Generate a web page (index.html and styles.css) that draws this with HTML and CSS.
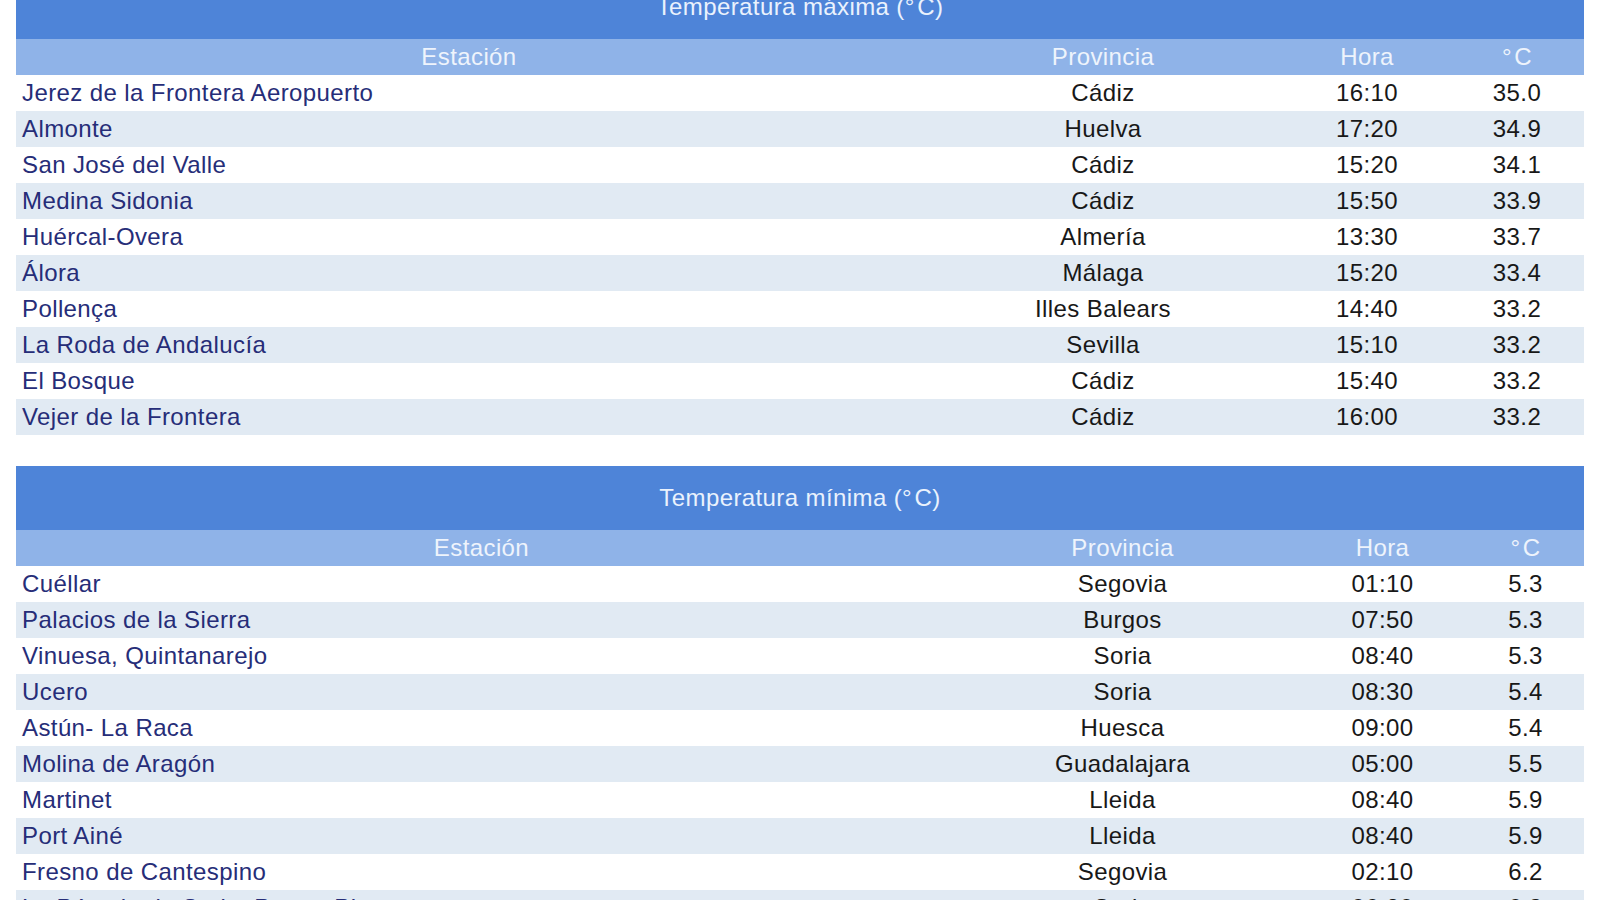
FILE: index.html
```html
<!DOCTYPE html>
<html lang="es">
<head>
<meta charset="utf-8">
<title>Temperaturas extremas</title>
<link rel="stylesheet" href="styles.css">
</head>
<body>
<div class="page">
  <table class="tabla tmax">
    <caption>Temperatura máxima (°&#8202;C)</caption>
    <colgroup>
      <col class="c-est"><col class="c-prov"><col class="c-hora"><col class="c-val">
    </colgroup>
    <thead>
      <tr><th>Estación</th><th>Provincia</th><th>Hora</th><th>°&#8202;C</th></tr>
    </thead>
    <tbody>
      <tr><td class="est"><a href="#">Jerez de la Frontera Aeropuerto</a></td><td>Cádiz</td><td>16:10</td><td>35.0</td></tr>
      <tr><td class="est"><a href="#">Almonte</a></td><td>Huelva</td><td>17:20</td><td>34.9</td></tr>
      <tr><td class="est"><a href="#">San José del Valle</a></td><td>Cádiz</td><td>15:20</td><td>34.1</td></tr>
      <tr><td class="est"><a href="#">Medina Sidonia</a></td><td>Cádiz</td><td>15:50</td><td>33.9</td></tr>
      <tr><td class="est"><a href="#">Huércal-Overa</a></td><td>Almería</td><td>13:30</td><td>33.7</td></tr>
      <tr><td class="est"><a href="#">Álora</a></td><td>Málaga</td><td>15:20</td><td>33.4</td></tr>
      <tr><td class="est"><a href="#">Pollença</a></td><td>Illes Balears</td><td>14:40</td><td>33.2</td></tr>
      <tr><td class="est"><a href="#">La Roda de Andalucía</a></td><td>Sevilla</td><td>15:10</td><td>33.2</td></tr>
      <tr><td class="est"><a href="#">El Bosque</a></td><td>Cádiz</td><td>15:40</td><td>33.2</td></tr>
      <tr><td class="est"><a href="#">Vejer de la Frontera</a></td><td>Cádiz</td><td>16:00</td><td>33.2</td></tr>
    </tbody>
  </table>

  <table class="tabla tmin">
    <caption>Temperatura mínima (°&#8202;C)</caption>
    <colgroup>
      <col class="c-est"><col class="c-prov"><col class="c-hora"><col class="c-val">
    </colgroup>
    <thead>
      <tr><th>Estación</th><th>Provincia</th><th>Hora</th><th>°&#8202;C</th></tr>
    </thead>
    <tbody>
      <tr><td class="est"><a href="#">Cuéllar</a></td><td>Segovia</td><td>01:10</td><td>5.3</td></tr>
      <tr><td class="est"><a href="#">Palacios de la Sierra</a></td><td>Burgos</td><td>07:50</td><td>5.3</td></tr>
      <tr><td class="est"><a href="#">Vinuesa, Quintanarejo</a></td><td>Soria</td><td>08:40</td><td>5.3</td></tr>
      <tr><td class="est"><a href="#">Ucero</a></td><td>Soria</td><td>08:30</td><td>5.4</td></tr>
      <tr><td class="est"><a href="#">Astún- La Raca</a></td><td>Huesca</td><td>09:00</td><td>5.4</td></tr>
      <tr><td class="est"><a href="#">Molina de Aragón</a></td><td>Guadalajara</td><td>05:00</td><td>5.5</td></tr>
      <tr><td class="est"><a href="#">Martinet</a></td><td>Lleida</td><td>08:40</td><td>5.9</td></tr>
      <tr><td class="est"><a href="#">Port Ainé</a></td><td>Lleida</td><td>08:40</td><td>5.9</td></tr>
      <tr><td class="est"><a href="#">Fresno de Cantespino</a></td><td>Segovia</td><td>02:10</td><td>6.2</td></tr>
      <tr><td class="est"><a href="#">La Póveda de Soria, Puerto Piqueras</a></td><td>Soria</td><td>06:20</td><td>6.3</td></tr>
    </tbody>
  </table>
</div>
</body>
</html>
```

FILE: styles.css
```css
html, body {
  margin: 0;
  padding: 0;
  background: #ffffff;
}

.page {
  margin-top: -25px;
  padding: 0 16px;
  display: flex;
  flex-direction: column;
  gap: 31px;
  font-family: "Liberation Sans", Arial, sans-serif;
  font-size: 24px;
  letter-spacing: 0.4px;
}

.tabla {
  width: 1568px;
  table-layout: fixed;
  border-collapse: collapse;
  border-spacing: 0;
}

.tabla caption {
  height: 64px;
  line-height: 64px;
  background: #4e84d8;
  color: #eaf2fd;
  text-align: center;
  padding: 0;
}

.tabla th {
  height: 36px;
  padding: 0;
  background: #8fb3e8;
  color: #eef4fc;
  font-weight: normal;
  text-align: center;
}

.tabla td {
  height: 36px;
  padding: 0;
  color: #181818;
  text-align: center;
  white-space: nowrap;
  overflow: hidden;
}

.tabla td.est {
  text-align: left;
  padding-left: 6px;
}

.tabla td.est a {
  color: #262d78;
  text-decoration: none;
}

.tabla tbody tr:nth-child(even) td {
  background: #e1eaf3;
}

.tmax .c-est { width: 906px; }
.tmax .c-prov { width: 362px; }
.tmax .c-hora { width: 166px; }
.tmax .c-val { width: 134px; }

.tmin .c-est { width: 931px; }
.tmin .c-prov { width: 351px; }
.tmin .c-hora { width: 169px; }
.tmin .c-val { width: 117px; }
```
